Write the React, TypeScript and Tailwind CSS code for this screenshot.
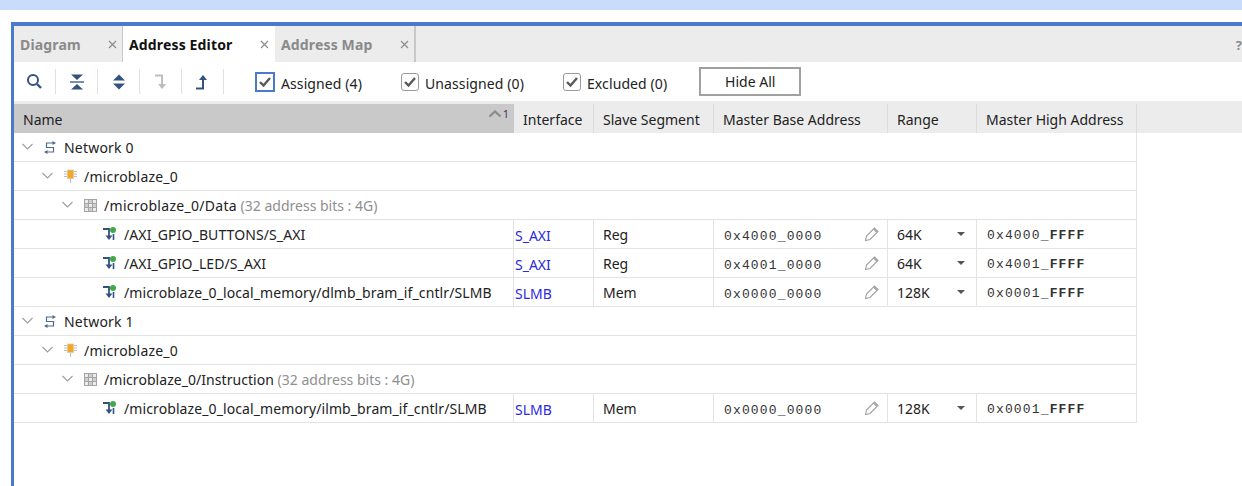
const ui = { fontFamily: '"Noto Sans", "Open Sans", sans-serif' };
const mono = { fontFamily: '"Liberation Mono", monospace' };

function X() {
  return (
    <svg width="9" height="9" viewBox="0 0 9 9" className="shrink-0">
      <path d="M1 1L8 8M8 1L1 8" stroke="#8c8c8c" strokeWidth="1.2" />
    </svg>
  );
}

function Divider() {
  return <div className="w-px h-[25px] bg-[#e0e0e0]" />;
}

function Tool({ children }: { children: React.ReactNode }) {
  return <div className="w-[41px] h-[25px] flex items-center justify-center">{children}</div>;
}

function Check({ active, label, className }: { active?: boolean; label: string; className: string }) {
  return (
    <div className={`flex items-center ${className}`}>
      <div
        className={
          active
            ? "w-[20px] h-[20px] border-[2px] border-[#4a7bcb] flex items-center justify-center"
            : "w-[18px] h-[18px] border-[1.5px] border-[#9a9a9a] rounded-[3px] flex items-center justify-center"
        }
      >
        <svg width="14" height="12" viewBox="0 0 14 12">
          <path d="M2 6L5.5 9.5L12 2" fill="none" stroke="#5a5a5a" strokeWidth="2.4" />
        </svg>
      </div>
      <span className="ml-[6px] text-[14px] tracking-[0.1px] text-[#222] relative top-[2px]">{label}</span>
    </div>
  );
}

function Chevron() {
  return (
    <svg width="13" height="8" viewBox="0 0 13 8" className="shrink-0">
      <path d="M1.5 1L6.5 6L11.5 1" fill="none" stroke="#a0a0a0" strokeWidth="1.2" />
    </svg>
  );
}

function NetIcon() {
  return (
    <svg width="12" height="13" viewBox="0 0 12 13" className="shrink-0">
      <path d="M9.5 2H2.5V6.5H9.5V11H2.5" fill="none" stroke="#51688f" strokeWidth="1.2" />
      <path d="M8.5 0L12 2L8.5 4Z M3.5 9L0 11L3.5 13Z" fill="#51688f" />
    </svg>
  );
}

function ChipIcon() {
  return (
    <svg width="13" height="14" viewBox="0 0 13 14" className="shrink-0">
      <path d="M0 2.5H3M0 5H3M0 7.5H3M10 2.5H13M10 5H13M10 7.5H13M6.5 10V14" stroke="#bdbdbd" strokeWidth="1" />
      <rect x="3.5" y="1" width="6" height="8.5" fill="#f5a623" stroke="#d9cba8" strokeWidth="0.8" />
    </svg>
  );
}

function GridIcon() {
  return (
    <svg width="13" height="13" viewBox="0 0 13 13" className="shrink-0">
      <rect width="13" height="13" fill="#a4a4a4" />
      <path d="M1 1h3v3H1zM9 1h3v3H9zM5 5h3v3H5zM1 9h3v3H1zM9 9h3v3H9z" fill="#ececec" />
      <path d="M5 1h3v3H5zM1 5h3v3H1zM9 5h3v3H9zM5 9h3v3H5z" fill="#cfcfcf" />
    </svg>
  );
}

function PortIcon() {
  return (
    <svg width="14" height="14" viewBox="0 0 14 14" className="shrink-0">
      <path d="M0 2H6V11" fill="none" stroke="#34527f" strokeWidth="1.8" />
      <path d="M2.5 8.5L6 13L9.5 8.5Z" fill="#34527f" />
      <path d="M10.5 13V7" stroke="#34527f" strokeWidth="1.6" />
      <circle cx="10" cy="3" r="3" fill="#3eaa4a" />
    </svg>
  );
}

function Pencil() {
  return (
    <svg width="16" height="16" viewBox="0 0 16 16" className="shrink-0">
      <path d="M1.5 14.5L2.5 10L10.5 2L14 5.5L6 13.5Z M9.5 3L13 6.5" fill="none" stroke="#a0a0a0" strokeWidth="1.1" />
    </svg>
  );
}

const cols = "grid-cols-[500px_80px_120px_174px_89px_160px]";

function Header({ label, first }: { label: string; first?: boolean }) {
  return (
    <div
      className={`h-[29px] flex items-center relative pl-[9px] text-[14px] text-[#222] ${
        first ? "bg-[#c9c9c9]" : "bg-[#ececec] border-r-[1px] border-[#dcdcdc]"
      }`}
    >
      <span className="relative top-px">{label}</span>
      {first && (
        <div className="absolute right-[5px] top-[3px] flex items-start">
          <svg width="14" height="9" viewBox="0 0 14 9" className="mt-[2px]">
            <path d="M1.5 7.5L7 2.5L12.5 7.5" fill="none" stroke="#8a8a8a" strokeWidth="2.2" />
          </svg>
          <span className="text-[11px] leading-[13px] text-[#5a2a6a] ml-[1px]">1</span>
        </div>
      )}
    </div>
  );
}

function GroupRow({ pad, icon, text, note, track = "tracking-[0.2px]" }: { pad: string; icon: React.ReactNode; text: string; note?: string; track?: string }) {
  return (
    <div className="col-span-6 h-[29px] border-b border-r border-[#e3e3e3] flex items-center text-[14px] text-[#222]">
      <div className={`flex items-center ${pad}`}>
        <Chevron />
        <div className="w-[20px] ml-[10px] flex justify-start items-center">{icon}</div>
        <span className={`whitespace-nowrap ${track}`}>
          {text}
          {note && <span className="text-[#8f8f8f] tracking-normal"> {note}</span>}
        </span>
      </div>
    </div>
  );
}

function DataRow({ name, iface, seg, base, range, high }: { name: string; iface: string; seg: string; base: string; range: string; high: string }) {
  const cell = "h-[29px] border-b border-r border-[#e3e3e3] flex items-center";
  const [hi, lo] = high.split("_");
  return (
    <>
      <div className={`${cell} pl-[89px] text-[14px] tracking-[0.1px] text-[#222] whitespace-nowrap`}>
        <PortIcon />
        <span className="ml-[7px]">{name}</span>
      </div>
      <div className={`${cell} pl-[1px] text-[14px] text-[#2a2ae0]`}>
        <span className="relative top-px">{iface}</span>
      </div>
      <div className={`${cell} pl-[9px] text-[14px] text-[#222]`}>{seg}</div>
      <div className={`${cell} pl-[10px] pr-[7px] justify-between`}>
        <span className="text-[13px] tracking-[1.15px] text-[#333] relative top-[3px]" style={mono}>{base}</span>
        <Pencil />
      </div>
      <div className={`${cell} pl-[9px] pr-[11px] justify-between text-[14px] text-[#222]`}>
        {range}
        <svg width="8" height="4" viewBox="0 0 8 4"><path d="M0 0H8L4 4Z" fill="#555" /></svg>
      </div>
      <div className={`${cell} pl-[10px]`}>
        <span className="text-[13px] tracking-[1.15px] text-[#333] relative top-[2px]" style={mono}>
          {hi}<span className="font-bold">_{lo}</span>
        </span>
      </div>
    </>
  );
}

export default function App() {
  return (
    <div className="w-[1242px] h-[486px] bg-white overflow-hidden" style={ui}>
      <div className="h-[10px] bg-[#c9dcfb]" />
      <div className="h-[12px]" />
      <div className="ml-[11px] h-[464px] border-t-[4px] border-l-[3px] border-[#4a7bcb]">
        <div className="h-[36px] bg-[#ececec] flex relative font-bold text-[14px] tracking-[0.15px]">
          <div className="w-[109px] border-r-[1px] border-[#c8c8c8] flex items-center justify-between pl-[6px] pr-[5px] text-[#8a8a8a]">
            <span>Diagram</span>
            <X />
          </div>
          <div className="w-[152px] bg-white flex items-center justify-between pl-[6px] pr-[6px] text-[#111]">
            <span>Address Editor</span>
            <X />
          </div>
          <div className="w-[141px] border-r-[2px] border-[#c8c8c8] flex items-center justify-between pl-[6px] pr-[5px] text-[#8a8a8a]">
            <span>Address Map</span>
            <X />
          </div>
          <span className="absolute right-0 top-[10px] text-[#8a8a8a] text-[13px]">?</span>
        </div>
        <div className="h-[39px] flex items-center">
          <div className="flex items-center">
            <Tool>
              <svg width="17" height="17" viewBox="0 0 17 17">
                <circle cx="7" cy="7" r="5" fill="none" stroke="#34527f" strokeWidth="2" />
                <path d="M11 11L15 15" stroke="#34527f" strokeWidth="2.4" />
              </svg>
            </Tool>
            <Divider />
            <Tool>
              <svg width="14" height="16" viewBox="0 0 14 16">
                <path d="M1 0.5H13L7 6Z M1 15.5H13L7 10Z" fill="#34527f" />
                <path d="M0 8H14" stroke="#34527f" strokeWidth="1.3" />
              </svg>
            </Tool>
            <Divider />
            <Tool>
              <svg width="14" height="16" viewBox="0 0 14 16">
                <path d="M7 0.5L13 6.5H1Z M7 15.5L13 9.5H1Z" fill="#34527f" />
              </svg>
            </Tool>
            <Divider />
            <Tool>
              <svg width="13" height="16" viewBox="0 0 13 16">
                <path d="M1 1.5H8V11" fill="none" stroke="#bdbdbd" strokeWidth="2" />
                <path d="M4 10H12L8 15Z" fill="#bdbdbd" />
              </svg>
            </Tool>
            <Divider />
            <Tool>
              <svg width="13" height="16" viewBox="0 0 13 16">
                <path d="M0 14.5H7V5" fill="none" stroke="#34527f" strokeWidth="2" />
                <path d="M3 6H11L7 1Z" fill="#34527f" />
              </svg>
            </Tool>
            <Divider />
          </div>
          <Check active label="Assigned (4)" className="ml-[31px]" />
          <Check label="Unassigned (0)" className="ml-[39px]" />
          <Check label="Excluded (0)" className="ml-[39px]" />
          <button className="ml-[32px] w-[102px] h-[29px] border-[2px] border-[#a0a0a0] text-[14px] text-[#222] bg-white flex items-center justify-center">
            Hide All
          </button>
        </div>
        <div className="h-[3px] bg-[#ececec]" />
        <div className="bg-[#ececec] h-[29px] w-full">
          <div className={`grid ${cols} w-[1123px]`}>
            <Header first label="Name" />
            <Header label="Interface" />
            <Header label="Slave Segment" />
            <Header label="Master Base Address" />
            <Header label="Range" />
            <Header label="Master High Address" />
          </div>
        </div>
        <div className={`grid ${cols} w-[1123px]`}>
          <GroupRow pad="pl-[7px]" icon={<NetIcon />} text="Network 0" />
          <GroupRow pad="pl-[27px]" icon={<ChipIcon />} text="/microblaze_0" />
          <GroupRow pad="pl-[47px]" icon={<GridIcon />} text="/microblaze_0/Data" note="(32 address bits : 4G)" track="tracking-[0.3px]" />
          <DataRow name="/AXI_GPIO_BUTTONS/S_AXI" iface="S_AXI" seg="Reg" base="0x4000_0000" range="64K" high="0x4000_FFFF" />
          <DataRow name="/AXI_GPIO_LED/S_AXI" iface="S_AXI" seg="Reg" base="0x4001_0000" range="64K" high="0x4001_FFFF" />
          <DataRow name="/microblaze_0_local_memory/dlmb_bram_if_cntlr/SLMB" iface="SLMB" seg="Mem" base="0x0000_0000" range="128K" high="0x0001_FFFF" />
          <GroupRow pad="pl-[7px]" icon={<NetIcon />} text="Network 1" />
          <GroupRow pad="pl-[27px]" icon={<ChipIcon />} text="/microblaze_0" />
          <GroupRow pad="pl-[47px]" icon={<GridIcon />} text="/microblaze_0/Instruction" note="(32 address bits : 4G)" track="tracking-[0.05px]" />
          <DataRow name="/microblaze_0_local_memory/ilmb_bram_if_cntlr/SLMB" iface="SLMB" seg="Mem" base="0x0000_0000" range="128K" high="0x0001_FFFF" />
        </div>
      </div>
    </div>
  );
}
